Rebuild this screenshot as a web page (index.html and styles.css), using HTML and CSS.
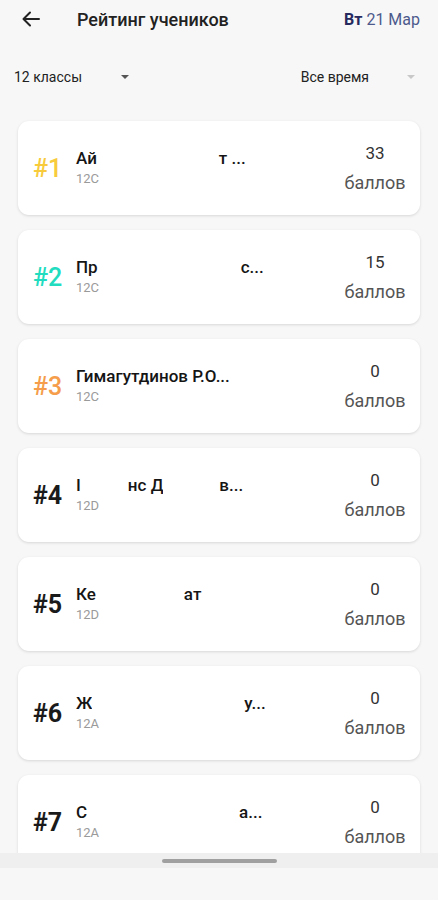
FILE: index.html
```html
<!DOCTYPE html>
<html lang="ru">
<head>
  <meta charset="UTF-8">
  <title>Рейтинг учеников</title>
  <link rel="stylesheet" href="styles.css">
</head>
<body>
  <div class="screen">
    <div class="topbar">
      <span class="back">
        <svg width="20" height="20" viewBox="0 0 20 20"><path d="M18 10H3M9 3.5L2.5 10 9 16.5" fill="none" stroke="#222" stroke-width="2" stroke-linecap="round" stroke-linejoin="round"/></svg>
      </span>
      <h1 class="title">Рейтинг учеников</h1>
      <div class="date"><b>Вт</b> 21 Мар</div>
    </div>

    <div class="filters">
      <div class="select">
        <span>12 классы</span>
        <span class="caret"></span>
      </div>
      <div class="select right">
        <span>Все время</span>
        <span class="caret light"></span>
      </div>
    </div>

    <div class="list">
      <div class="card">
        <div class="rank gold">#1</div>
        <div class="info">
          <div class="name">Ай<span class="hide w1"></span>т ...</div>
          <div class="cls">12C</div>
        </div>
        <div class="score"><span>33</span><span class="unit">баллов</span></div>
      </div>
      <div class="card">
        <div class="rank teal">#2</div>
        <div class="info">
          <div class="name">Пр<span class="hide w2"></span>с...</div>
          <div class="cls">12C</div>
        </div>
        <div class="score"><span>15</span><span class="unit">баллов</span></div>
      </div>
      <div class="card">
        <div class="rank orange">#3</div>
        <div class="info">
          <div class="name">Гимагутдинов Р.О...</div>
          <div class="cls">12C</div>
        </div>
        <div class="score"><span>0</span><span class="unit">баллов</span></div>
      </div>
      <div class="card">
        <div class="rank">#4</div>
        <div class="info">
          <div class="name">I<span class="hide w3"></span>нс Д<span class="hide w4"></span>в...</div>
          <div class="cls">12D</div>
        </div>
        <div class="score"><span>0</span><span class="unit">баллов</span></div>
      </div>
      <div class="card">
        <div class="rank">#5</div>
        <div class="info">
          <div class="name">Ке<span class="hide w5"></span>ат</div>
          <div class="cls">12D</div>
        </div>
        <div class="score"><span>0</span><span class="unit">баллов</span></div>
      </div>
      <div class="card">
        <div class="rank">#6</div>
        <div class="info">
          <div class="name">Ж<span class="hide w6"></span>у...</div>
          <div class="cls">12A</div>
        </div>
        <div class="score"><span>0</span><span class="unit">баллов</span></div>
      </div>
      <div class="card">
        <div class="rank">#7</div>
        <div class="info">
          <div class="name">С<span class="hide w7"></span>а...</div>
          <div class="cls">12A</div>
        </div>
        <div class="score"><span>0</span><span class="unit">баллов</span></div>
      </div>
    </div>

    <div class="navbar">
      <div class="handle"></div>
    </div>
  </div>
</body>
</html>
```
FILE: styles.css
```css
html, body {
  margin: 0;
  padding: 0;
  background-color: #F7F7F7;
  font-family: Roboto, 'Noto Sans', sans-serif;
  color: #1E1E1E;
}

.screen {
  width: 438px;
  height: 900px;
  display: flex;
  flex-direction: column;
  overflow: hidden;
}

.topbar {
  height: 38px;
  display: flex;
  align-items: center;
  padding: 0 18px 0 21px;
}

.back {
  display: flex;
  width: 20px;
  height: 20px;
}

.title {
  margin: 0 0 0 36px;
  font-size: 18px;
  font-weight: 500;
  color: #222;
  flex: 1;
}

.date {
  font-size: 16px;
  color: #4D5A8C;
}

.date b {
  color: #262A5E;
  font-weight: 700;
}

.filters {
  height: 42px;
  margin-top: 31px;
  display: flex;
  justify-content: space-between;
  align-items: flex-start;
  padding: 0 23px 0 14px;
}

.select {
  display: flex;
  align-items: center;
  font-size: 14px;
  color: #222;
  gap: 39px;
}

.select.right {
  gap: 38px;
}

.caret {
  width: 0;
  height: 0;
  border-left: 4px solid transparent;
  border-right: 4px solid transparent;
  border-top: 4px solid #555;
}

.caret.light {
  border-top-color: #C8C8C8;
}

.list {
  flex: 1;
  overflow: hidden;
  padding: 10px 18px 0 18px;
  display: flex;
  flex-direction: column;
  gap: 15px;
}

.card {
  flex-shrink: 0;
  height: 94px;
  background-color: #fff;
  border-radius: 11px;
  box-shadow: 0 1px 3px rgba(0, 0, 0, 0.13);
  display: flex;
  align-items: center;
  padding: 0 12px 0 15px;
  box-sizing: border-box;
}

.rank {
  width: 43px;
  font-size: 25px;
  font-weight: 700;
  color: #1A1A1A;
  margin-top: 1px;
}

.rank.gold { color: #F7CB3C; font-weight: 500; }
.rank.teal { color: #22DCC0; font-weight: 500; }
.rank.orange { color: #F59D4A; font-weight: 500; }

.info {
  flex: 1;
  display: flex;
  flex-direction: column;
  margin-top: -4px;
}

.name {
  font-size: 17px;
  font-weight: 500;
  color: #151515;
  white-space: nowrap;
  display: flex;
  align-items: center;
  height: 22px;
}

.hide {
  display: inline-block;
  height: 22px;
  background-color: #fff;
}

.w1 { width: 122px; }
.w2 { width: 143px; }
.w3 { width: 47px; }
.w4 { width: 56px; }
.w5 { width: 88px; }
.w6 { width: 152px; }
.w7 { width: 152px; }

.cls {
  font-size: 13px;
  color: #9A9A9A;
  margin-top: 2px;
}

.score {
  width: 66px;
  display: flex;
  flex-direction: column;
  align-items: center;
  font-size: 17px;
  color: #333;
  margin-top: -1px;
}

.score .unit {
  font-size: 18px;
  color: #555;
  margin-top: 9px;
}

.navbar {
  height: 47px;
  flex-shrink: 0;
  background: linear-gradient(#EFEFEF 0, #EFEFEF 15px, #F7F7F7 15px);
  display: flex;
  justify-content: center;
}

.handle {
  width: 115px;
  height: 4px;
  border-radius: 2px;
  background-color: #A0A0A0;
  margin-top: 6px;
}
```
